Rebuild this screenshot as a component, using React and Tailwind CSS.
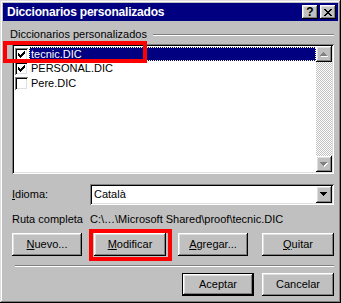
import React from 'react';

const raised =
  'shadow-[inset_-1px_-1px_0_#000,inset_1px_1px_0_#fff,inset_-2px_-2px_0_#808080,inset_2px_2px_0_#dfdfdf]';
const sunken =
  'shadow-[inset_1px_1px_0_#808080,inset_-1px_-1px_0_#fff,inset_2px_2px_0_#000,inset_-2px_-2px_0_#dfdfdf]';

const CHECK = [[6], [5, 6], [0, 4, 5, 6], [0, 1, 3, 4, 5], [0, 1, 2, 3, 4], [1, 2, 3], [2]];
const CLOSE = [[0, 1, 6, 7], [1, 2, 5, 6], [2, 3, 4, 5], [3, 4], [2, 3, 4, 5], [1, 2, 5, 6], [0, 1, 6, 7]];

function Pixels({ rows, w, h, color = '#000' }) {
  return (
    <svg width={w} height={h} viewBox={`0 0 ${w} ${h}`} shapeRendering="crispEdges">
      {rows.map((cols, y) =>
        cols.map((x) => <rect key={`${x}-${y}`} x={x} y={y} width="1" height="1" fill={color} />)
      )}
    </svg>
  );
}

function Checkbox({ checked }) {
  return (
    <div className={`flex h-[13px] w-[13px] shrink-0 items-center justify-center bg-white ${sunken}`}>
      {checked && <Pixels rows={CHECK} w={7} h={7} />}
    </div>
  );
}

function Arrow({ down, disabled }) {
  const pts = down ? '0,0 7,0 3.5,4' : '3.5,0 7,4 0,4';
  return (
    <svg width="8" height="5" viewBox="0 0 8 5" shapeRendering="crispEdges">
      {disabled && <polygon points={pts} fill="#fff" transform="translate(1,1)" />}
      <polygon points={pts} fill={disabled ? '#808080' : '#000'} />
    </svg>
  );
}

function Button({ children, className = '', isDefault = false }) {
  return (
    <div
      className={`flex h-[23px] items-center justify-center bg-[#c0c0c0] text-black ${
        isDefault ? 'border border-black' : ''
      } ${raised} ${className}`}
    >
      {children}
    </div>
  );
}

const items = [
  { name: 'tecnic.DIC', checked: true, selected: true },
  { name: 'PERSONAL.DIC', checked: true },
  { name: 'Pere.DIC', checked: false },
];

export default function App() {
  return (
    <div className="relative flex h-[303px] w-[341px] flex-col bg-[#c0c0c0] p-[3px] font-['Liberation_Sans',Arial,sans-serif] text-[11px] leading-none text-black shadow-[inset_-1px_-1px_0_#000,inset_1px_1px_0_#dfdfdf,inset_-2px_-2px_0_#808080,inset_2px_2px_0_#fff]">
      {/* title bar */}
      <div className="flex h-[18px] items-center bg-[#000080] pl-[4px] pr-[2px]">
        <span className="flex-1 text-[12px] font-bold tracking-[-0.2px] text-white">Diccionarios personalizados</span>
        <div className={`flex h-[14px] w-[16px] items-center justify-center bg-[#c0c0c0] text-[12px] font-bold ${raised}`}>
          ?
        </div>
        <div className={`ml-[2px] flex h-[14px] w-[16px] items-center justify-center bg-[#c0c0c0] ${raised}`}>
          <Pixels rows={CLOSE} w={8} h={7} />
        </div>
      </div>

      {/* group header */}
      <div className="mt-[7px] flex h-[13px] items-center pl-[7px] pr-[4px]">
        <span>Diccionarios personalizados</span>
        <div className="ml-[6px] h-[2px] flex-1 border-t border-b border-t-[#808080] border-b-white" />
      </div>

      {/* list */}
      <div className={`ml-[9px] mt-[3px] flex h-[130px] w-[322px] bg-white p-[2px] ${sunken}`}>
        <div className="flex flex-1 flex-col pt-[1px]">
          {items.map((it) => (
            <div key={it.name} className="flex h-[14.5px] items-center pl-[1px]">
              <Checkbox checked={it.checked} />
              <div
                className={`ml-[1px] flex h-[14px] flex-1 items-center pl-[1px] ${
                  it.selected ? 'border border-dotted border-[#ffffc0] bg-[#000080] text-white' : 'border border-transparent'
                }`}
              >
                {it.name}
              </div>
            </div>
          ))}
        </div>
        <div className="flex w-[16px] flex-col">
          <div className={`flex h-[16px] items-center justify-center bg-[#c0c0c0] ${raised}`}>
            <Arrow disabled />
          </div>
          <div className="flex-1 bg-[image:repeating-conic-gradient(#fff_0_25%,#c0c0c0_0_50%)] bg-[length:2px_2px]" />
          <div className={`flex h-[16px] items-center justify-center bg-[#c0c0c0] ${raised}`}>
            <Arrow down disabled />
          </div>
        </div>
      </div>

      {/* idioma */}
      <div className="mt-[10px] flex h-[21px] items-center pl-[9px]">
        <span className="w-[78px]">
          <span className="underline">I</span>dioma:
        </span>
        <div className={`flex h-[21px] w-[244px] items-center bg-white p-[2px] ${sunken}`}>
          <span className="flex-1 pl-[2px]">Català</span>
          <div className={`flex h-[17px] w-[16px] items-center justify-center bg-[#c0c0c0] ${raised}`}>
            <Arrow down />
          </div>
        </div>
      </div>

      {/* ruta */}
      <div className="mt-[8px] flex h-[13px] items-center pl-[9px]">
        <span className="w-[78px]">Ruta completa</span>
        <span>C:\…\Microsoft Shared\proof\tecnic.DIC</span>
      </div>

      {/* action buttons */}
      <div className="mt-[7px] flex pl-[9px]">
        <Button className="w-[70px]">
          <span><span className="underline">N</span>uevo...</span>
        </Button>
        <div className="relative ml-[12px]">
          <Button className="w-[72px]">
            <span><span className="underline">M</span>odificar</span>
          </Button>
          <div className="absolute -bottom-[5px] -left-[5px] -right-[6px] -top-[4px] border-4 border-[#ff0000]" />
        </div>
        <Button className="ml-[12px] w-[70px]">
          <span><span className="underline">A</span>gregar...</span>
        </Button>
        <Button className="ml-[14px] w-[72px]">
          <span><span className="underline">Q</span>uitar</span>
        </Button>
      </div>

      {/* separator */}
      <div className="ml-[12px] mr-[4px] mt-[9px] h-[2px] border-t border-b border-t-[#808080] border-b-white" />

      {/* dialog buttons */}
      <div className="mt-[6px] flex justify-end pr-[4px]">
        <Button isDefault className="w-[72px]">Aceptar</Button>
        <Button className="ml-[8px] w-[72px]">Cancelar</Button>
      </div>

      {/* annotation around the first item */}
      <div className="absolute left-[3px] top-[41px] h-[22px] w-[144px] border-4 border-[#ff0000]" />
    </div>
  );
}
